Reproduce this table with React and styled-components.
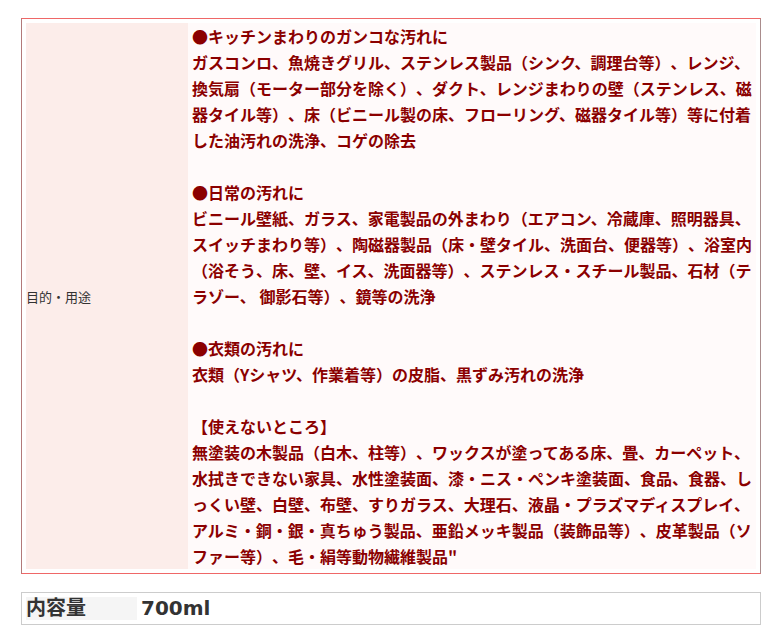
import styled, { createGlobalStyle } from "styled-components";

const GlobalStyle = createGlobalStyle`
  body {
    margin: 0;
    background: #fff;
    font-family: "DejaVu Sans", "Noto Sans CJK JP", sans-serif;
  }
`;

const usage = [
  "●キッチンまわりのガンコな汚れに",
  "ガスコンロ、魚焼きグリル、ステンレス製品（シンク、調理台等）、レンジ、",
  "換気扇（モーター部分を除く）、ダクト、レンジまわりの壁（ステンレス、磁",
  "器タイル等）、床（ビニール製の床、フローリング、磁器タイル等）等に付着",
  "した油汚れの洗浄、コゲの除去",
  "",
  "●日常の汚れに",
  "ビニール壁紙、ガラス、家電製品の外まわり（エアコン、冷蔵庫、照明器具、",
  "スイッチまわり等）、陶磁器製品（床・壁タイル、洗面台、便器等）、浴室内",
  "（浴そう、床、壁、イス、洗面器等）、ステンレス・スチール製品、石材（テ",
  "ラゾー、 御影石等）、鏡等の洗浄",
  "",
  "●衣類の汚れに",
  "衣類（Yシャツ、作業着等）の皮脂、黒ずみ汚れの洗浄",
  "",
  "【使えないところ】",
  "無塗装の木製品（白木、柱等）、ワックスが塗ってある床、畳、カーペット、",
  "水拭きできない家具、水性塗装面、漆・ニス・ペンキ塗装面、食品、食器、し",
  "っくい壁、白壁、布壁、すりガラス、大理石、液晶・プラズマディスプレイ、",
  "アルミ・銅・銀・真ちゅう製品、亜鉛メッキ製品（装飾品等）、皮革製品（ソ",
  "ファー等）、毛・絹等動物繊維製品\"",
];

const App = () => {
  return (
    <Page>
      <GlobalStyle />
      <SpecTable $tone="red">
        <Row>
          <LabelCell $width={162} $bg="#fcedea">
            <SmallLabel>目的・用途</SmallLabel>
          </LabelCell>
          <ValueCell $bg="#fffafa">
            {usage.map((line, i) => (
              <Line key={i}>{line || "\u00a0"}</Line>
            ))}
          </ValueCell>
        </Row>
      </SpecTable>

      <SpecTable $tone="gray">
        <Row>
          <LabelCell $width={111} $bg="#f5f5f5">
            <BigText>内容量</BigText>
          </LabelCell>
          <ValueCell>
            <BigText>700ml</BigText>
          </ValueCell>
        </Row>
      </SpecTable>
    </Page>
  );
};
export default App;

const Page = styled.div`
  padding: 18px 10px 0 21px;
  width: 740px;
  display: flex;
  flex-direction: column;
  gap: 18px;
`;

const SpecTable = styled.div`
  padding: 4px;
  border: 1px solid;
  border-color: ${({ $tone }) =>
    $tone === "red"
      ? "#ef6767 #a98c8c #ef6767 #b27a7a"
      : "#cccccc"};
`;

const Row = styled.div`
  display: flex;
  align-items: stretch;
`;

const LabelCell = styled.div`
  flex: 0 0 ${({ $width }) => $width}px;
  background: ${({ $bg }) => $bg};
  display: flex;
  align-items: center;
`;

const ValueCell = styled.div`
  flex: 1;
  padding-left: 4px;
  background: ${({ $bg }) => $bg || "transparent"};
`;

const SmallLabel = styled.span`
  font-size: 13px;
  color: #333;
  font-family: "Noto Sans CJK JP", sans-serif;
  text-spacing-trim: space-all;
`;

const Line = styled.div`
  font-family: "Noto Sans CJK JP", sans-serif;
  font-size: 16px;
  line-height: 26px;
  font-weight: bold;
  color: #8b0000;
  white-space: nowrap;
  text-spacing-trim: space-all;
`;

const BigText = styled.span`
  font-size: 20px;
  line-height: 23px;
  font-weight: bold;
  color: #333;
`;
